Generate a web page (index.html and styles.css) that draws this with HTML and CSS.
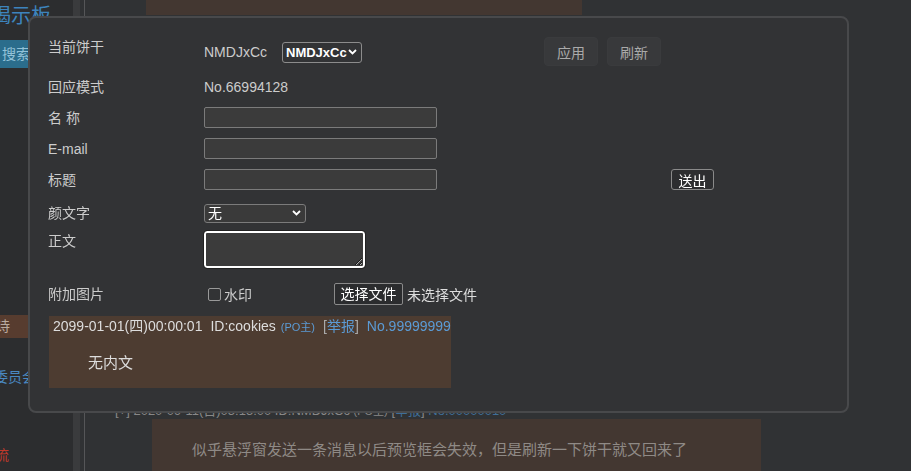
FILE: index.html
```html
<!DOCTYPE html>
<html lang="zh-CN">
<head>
  <meta charset="UTF-8">
  <title>回应</title>
  <meta name="viewport" content="width=device-width, initial-scale=1">
  <link rel="stylesheet" href="styles.css">
</head>
<body>

  <div class="page">
    <aside class="side">
      <div class="side-title">揭示板</div>
      <div class="side-search">搜索</div>
      <div class="side-item active">诗</div>
      <div class="side-link">委员会</div>
      <div class="side-red">流</div>
    </aside>
    <div class="rail"></div>
    <main class="thread">
      <div class="reply-top"></div>
      <div class="post-head">[+] 2020-09-11(日)05:15:00 ID:NMDJxCc <span class="po">(PO主)</span> [<span class="link">举报</span>] <span class="link">No.00000010</span></div>
      <div class="reply-bottom">似乎悬浮窗发送一条消息以后预览框会失效，但是刷新一下饼干就又回来了</div>
    </main>
  </div>

  <div class="modal">
    <form class="reply-form">
      <div class="row row-cookie">
        <div class="label">当前饼干</div>
        <div class="field cookie">
          <span>NMDJxCc</span>
          <span class="select-wrap sel-cookie">
            <select><option>NMDJxCc</option></select>
            <svg class="chev" width="9" height="6" viewBox="0 0 9 6"><path d="M1 1l3.5 3.5L8 1" fill="none" stroke="#fff" stroke-width="1.8"/></svg>
          </span>
        </div>
        <div class="actions">
          <button type="button" class="soft-btn">应用</button>
          <button type="button" class="soft-btn">刷新</button>
        </div>
      </div>

      <div class="row row-mode">
        <div class="label">回应模式</div>
        <div class="field">No.66994128</div>
      </div>

      <div class="row">
        <div class="label">名 称</div>
        <div class="field"><input type="text"></div>
      </div>

      <div class="row">
        <div class="label">E-mail</div>
        <div class="field"><input type="text"></div>
      </div>

      <div class="row">
        <div class="label">标题</div>
        <div class="field"><input type="text"></div>
        <div class="actions"><button type="button" class="send-btn">送出</button></div>
      </div>

      <div class="row row-kao">
        <div class="label">颜文字</div>
        <div class="field">
          <span class="select-wrap sel-kao">
            <select><option>无</option></select>
            <svg class="chev" width="9" height="6" viewBox="0 0 9 6"><path d="M1 1l3.5 3.5L8 1" fill="none" stroke="#fff" stroke-width="1.8"/></svg>
          </span>
        </div>
      </div>

      <div class="row row-body">
        <div class="label">正文</div>
        <div class="field"><textarea></textarea></div>
      </div>

      <div class="row row-file">
        <div class="label">附加图片</div>
        <div class="field files">
          <label class="check"><span class="box"></span>水印</label>
          <span class="file-btn">选择文件</span>
          <span class="file-none">未选择文件</span>
        </div>
      </div>

      <div class="preview">
        <div class="preview-head">
          <span>2099-01-01(四)00:00:01</span>
          <span>ID:cookies</span>
          <span class="po">(PO主)</span>
          <span class="bracket">[<span class="link">举报</span>]</span>
          <span class="link no">No.99999999</span>
        </div>
        <div class="preview-body">无内文</div>
      </div>
    </form>
  </div>

</body>
</html>
```

FILE: styles.css
```css
* {
  box-sizing: border-box;
}
body {
  margin: 0;
  padding: 0;
  background-color: #303234;
  font-family: 'Liberation Sans', 'Noto Sans CJK SC', sans-serif;
  color: #ccc;
  height: 471px;
  overflow: hidden;
}

/* page behind the floating window */
.page {
  display: grid;
  grid-template-columns: 73px 7px 4px 1px 1fr;
  height: 471px;
}
.side {
  grid-column: 1;
  background-color: #2c2d2f;
  overflow: hidden;
  padding-top: 3px;
}
.side-title {
  margin-left: -9px;
  font-size: 20px;
  line-height: 26px;
  color: #3d84bd;
}
.side-search {
  margin-top: 11px;
  width: 28px;
  height: 28px;
  line-height: 28px;
  background-color: #2b6d8c;
  color: #93c2d8;
  font-size: 14px;
  padding-left: 2px;
  white-space: nowrap;
  overflow: hidden;
}
.side-item {
  margin-top: 247px;
  height: 23px;
  line-height: 23px;
  background-color: #573c2f;
  color: #b9aaa0;
  font-size: 14px;
  margin-left: -4px;
}
.side-link {
  margin-top: 28px;
  margin-left: -6px;
  color: #4a88c0;
  font-size: 14px;
  white-space: nowrap;
}
.side-red {
  margin-top: 58px;
  margin-left: -5px;
  color: #c0392b;
  font-size: 14px;
}
.rail {
  grid-column: 2;
  background-color: #3a3b3d;
}
.page::after {
  content: "";
  grid-column: 4;
  grid-row: 1;
  background-color: #555658;
}
.thread {
  grid-column: 5;
  grid-row: 1;
}
.reply-top {
  margin-left: 61px;
  width: 436px;
  height: 15px;
  background-color: #433731;
}
.post-head {
  margin-top: 388px;
  margin-left: 30px;
  font-size: 13px;
  line-height: 15px;
  color: #888;
  white-space: nowrap;
}
.post-head .po {
  font-size: 11px;
}
.post-head .link {
  color: #3f6f99;
}
.reply-bottom {
  margin-left: 67px;
  width: 609px;
  height: 60px;
  background-color: #433731;
  color: #8f8a86;
  font-size: 15px;
  padding: 19px 0 0 40px;
}

/* floating reply window */
.modal {
  position: fixed;
  left: 28px;
  top: 16px;
  width: 821px;
  height: 397px;
  background-color: #323335;
  border: 2px solid #48494b;
  border-radius: 8px;
  padding: 19px 0 0 18px;
}
.row {
  display: grid;
  grid-template-columns: 156px 340px auto;
  align-items: center;
  margin-top: 10px;
  height: 21px;
  font-size: 14px;
}
.label {
  color: #ccc;
  line-height: 20px;
}
.field {
  display: flex;
  align-items: center;
  color: #ccc;
}
.row-cookie {
  margin-top: 0;
  height: 30px;
  align-items: start;
}
.row-mode {
  height: 20px;
}
.cookie {
  gap: 15px;
  height: 30px;
}
.actions {
  display: flex;
  gap: 9px;
}
.soft-btn {
  width: 54px;
  height: 29px;
  background-color: #38393b;
  border: 1px solid #3a3b3d;
  border-radius: 4px;
  color: #aaa;
  font-family: inherit;
  font-size: 14px;
  padding: 0;
}
.send-btn {
  margin-left: 127px;
  width: 43px;
  height: 21px;
  background-color: #2d2e30;
  border: 1px solid #8a8a8a;
  border-radius: 3px;
  color: #fff;
  font-family: inherit;
  font-size: 14px;
  padding: 0;
}
input[type=text] {
  width: 233px;
  height: 21px;
  background-color: #3b3b3b;
  border: 1px solid #7b7b7b;
  border-radius: 2px;
}
.select-wrap {
  position: relative;
  display: inline-block;
}
.select-wrap select {
  appearance: none;
  -webkit-appearance: none;
  border-radius: 3px;
  color: #fff;
  font-family: inherit;
  margin: 0;
}
.chev {
  position: absolute;
  top: 50%;
  margin-top: -3px;
  right: 5px;
  pointer-events: none;
}
.sel-cookie select {
  width: 80px;
  height: 21px;
  background-color: #323335;
  border: 1px solid #8c8c8c;
  font-size: 13px;
  font-weight: bold;
  padding: 0 0 0 3px;
}
.row-kao {
  margin-top: 13px;
  height: 19px;
}
.sel-kao select {
  width: 102px;
  height: 19px;
  background-color: #3a3a3a;
  border: 1px solid #7b7b7b;
  font-size: 14px;
  padding: 0 0 0 3px;
}
.row-body {
  margin-top: 9px;
  height: 37px;
  align-items: start;
}
textarea {
  display: block;
  width: 161px;
  height: 37px;
  background-color: #3b3b3b;
  border: 2px solid #fff;
  border-radius: 3px;
  outline: 1px solid #222;
  resize: both;
}
.row-file {
  margin-top: 15px;
  height: 22px;
}
.files {
  height: 22px;
}
.check {
  display: flex;
  align-items: center;
  margin-left: 4px;
  color: #ccc;
}
.check .box {
  width: 13px;
  height: 13px;
  border: 1px solid #999;
  border-radius: 2px;
  margin-right: 3px;
}
.file-btn {
  margin-left: 82px;
  width: 69px;
  height: 22px;
  line-height: 20px;
  text-align: center;
  background-color: #2b2c2e;
  border: 1px solid #8a8a8a;
  border-radius: 2px;
  color: #fff;
}
.file-none {
  margin-left: 4px;
  color: #ddd;
}
.preview {
  margin: 11px 0 0 1px;
  width: 402px;
  height: 72px;
  background-color: #4d3c31;
  padding: 2px 0 0 4px;
}
.preview-head {
  display: flex;
  align-items: baseline;
  gap: 8px;
  font-size: 14px;
  line-height: 17px;
  color: #ddd;
  white-space: nowrap;
}
.preview-head .po {
  margin-left: -3px;
  font-size: 11px;
  color: #5b9bd5;
}
.preview-head .bracket {
  color: #aaa;
}
.preview-head .link {
  color: #5b9bd5;
}
.preview-body {
  margin: 15px 0 0 35px;
  font-size: 15px;
  color: #ddd;
}
```
